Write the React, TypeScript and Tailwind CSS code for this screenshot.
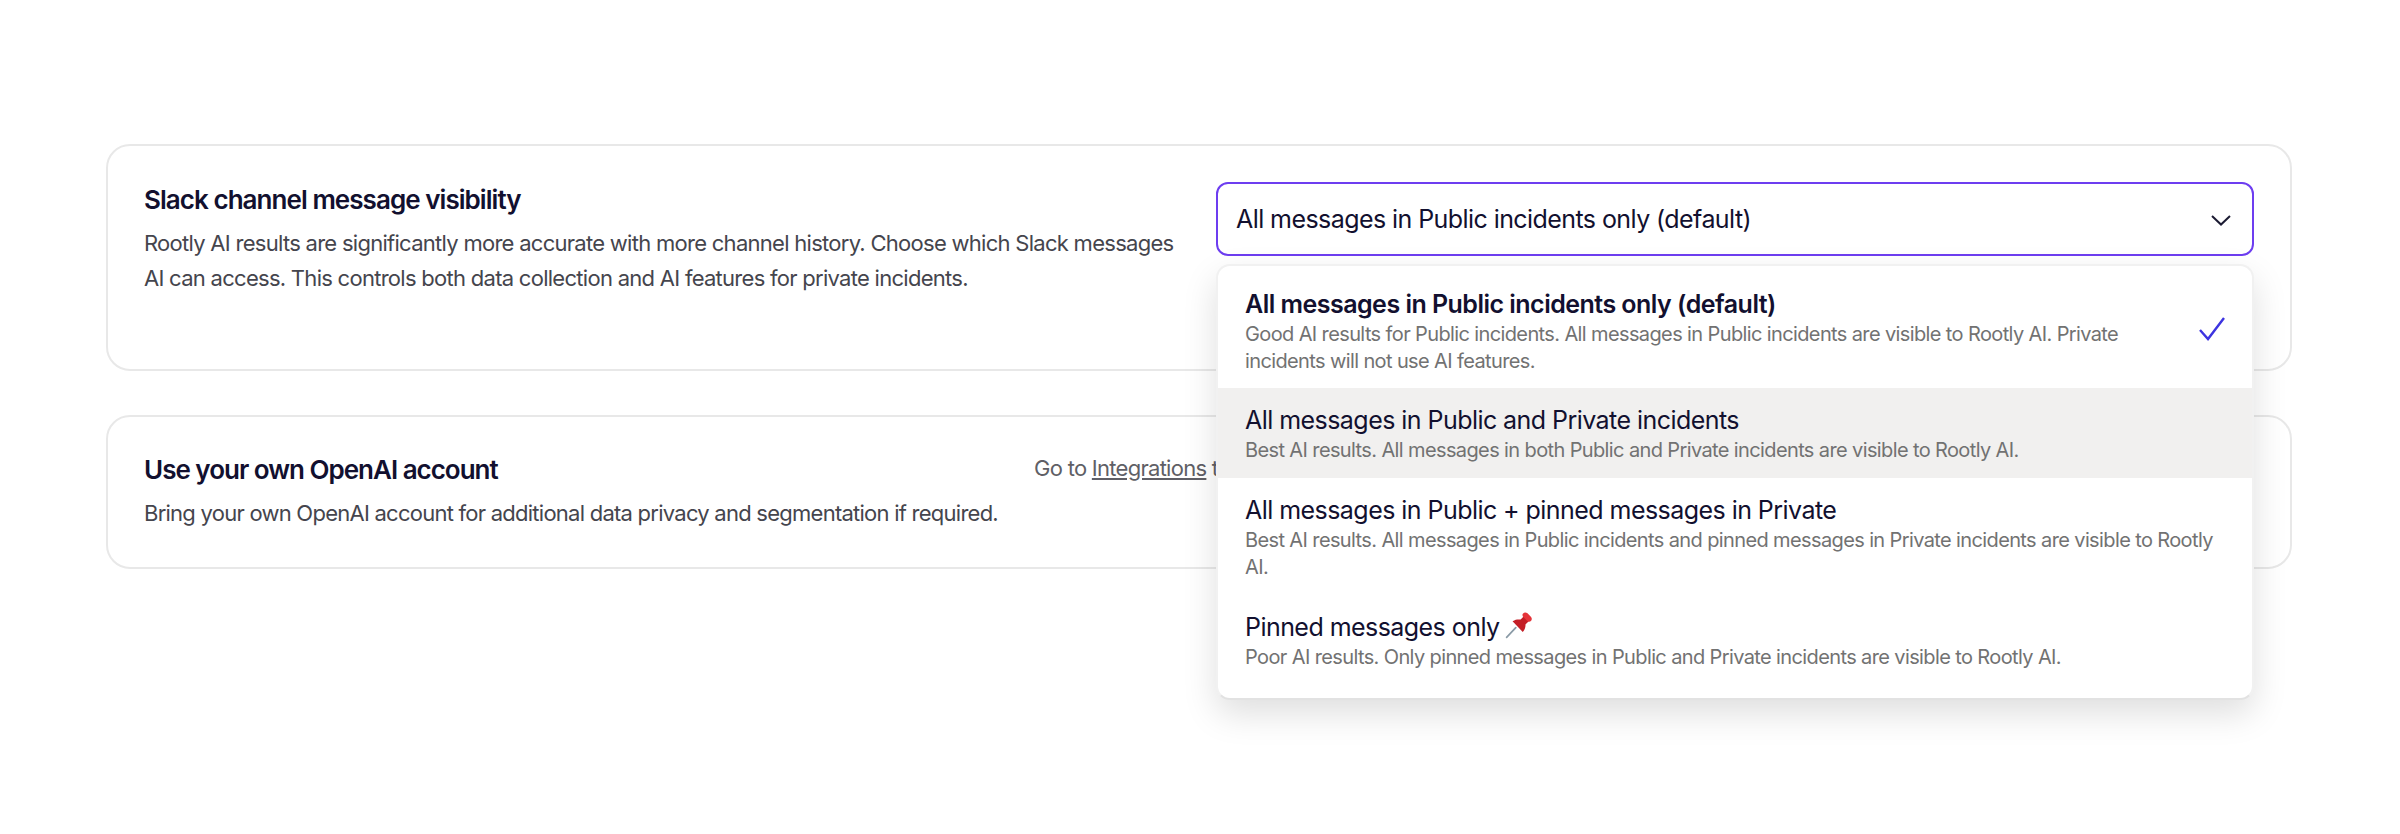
import React from "react";

const Pin = () => (
  <svg width="28" height="28" viewBox="0 0 26 26" className="inline-block align-[-3px] ml-[5px]">
    <path d="M1.5 24.5 L10 15.5" stroke="#8a9aa6" strokeWidth="1.6" strokeLinecap="round" />
    <path d="M7 9.5 C10 7.6 12.5 7.8 14.5 8 L18 4.5 L22.5 9 L19 12.5 C19.2 14.5 18.4 17.4 16.5 19.5 Z" fill="#c41e26" />
    <path d="M16.6 2.5 C17.8 1 19.6 1 20.9 2.2 L24.2 5.5 C25.3 6.8 25 8.6 23.8 9.6 C22.6 10.4 21.4 10 20.4 9 L17.2 5.8 C16.2 4.7 15.9 3.5 16.6 2.5 Z" fill="#e5343a" />
  </svg>
);

const options = [
  {
    title: "All messages in Public incidents only (default)",
    desc: "Good AI results for Public incidents. All messages in Public incidents are visible to Rootly AI. Private incidents will not use AI features.",
    selected: true,
    cls: "h-[122px] pt-[24px]",
  },
  {
    title: "All messages in Public and Private incidents",
    desc: "Best AI results. All messages in both Public and Private incidents are visible to Rootly AI.",
    cls: "h-[90px] pt-[18px] bg-[#f1f0ef]",
  },
  {
    title: "All messages in Public + pinned messages in Private",
    desc: "Best AI results. All messages in Public incidents and pinned messages in Private incidents are visible to Rootly AI.",
    cls: "h-[116px] pt-[18px]",
  },
  {
    title: "Pinned messages only",
    pin: true,
    desc: "Poor AI results. Only pinned messages in Public and Private incidents are visible to Rootly AI.",
    cls: "h-[106px] pt-[17px]",
  },
];

export default function App() {
  return (
    <div className="min-h-[834px] bg-white pl-[106px] pr-[108px] pt-[144px] font-['Inter',sans-serif] flex flex-col gap-[44px]">
      <div className="relative h-[227px] rounded-[24px] border-2 border-[#e8e8e8] px-[36px] pt-[36px] flex gap-[40px]">
        <div className="w-[1032px] shrink-0">
          <h2 className="mt-[2px] text-[26px] leading-[32px] font-semibold tracking-[-0.95px] text-[#12102f]">Slack channel message visibility</h2>
          <p className="mt-[10px] text-[22px] leading-[35px] tracking-[-0.72px] text-[#45454d]">
            Rootly AI results are significantly more accurate with more channel history. Choose which Slack messages AI can access. This controls both data collection and AI features for private incidents.
          </p>
        </div>
        <div className="relative flex-1">
          <div className="h-[74px] rounded-[12px] border-2 border-[#6d3df0] flex items-center justify-between pl-[18px] pr-[20px] pt-[2px] text-[25px] tracking-[-0.57px] text-[#12102f]">
            <span>All messages in Public incidents only (default)</span>
            <svg width="22" height="14" viewBox="0 0 22 14" fill="none"><path d="M2 3 L11 11.5 L20 3" stroke="#1c1b33" strokeWidth="2" /></svg>
          </div>
          <div className="absolute z-10 left-0 right-0 top-[82px] h-[436px] overflow-hidden rounded-[14px] bg-white border-2 border-[#f1f1f1] border-b-[#e2e2e2] shadow-[0_14px_34px_rgba(0,0,0,0.13)]">
            {options.map((o) => (
              <div key={o.title} className={`relative px-[27px] ${o.cls}`}>
                <div className={`text-[25px] leading-[28px] text-[#12102f] ${o.selected ? "font-semibold tracking-[-0.52px]" : "tracking-[-0.55px]"}`}>
                  {o.title}
                  {o.pin && <Pin />}
                </div>
                <div className="mt-[3px] text-[20px] leading-[27px] tracking-[-0.62px] text-[#727272]" style={{ width: o.selected ? 900 : 970 }}>{o.desc}</div>
                {o.selected && (
                  <svg className="absolute right-[26px] top-[50px]" width="28" height="26" viewBox="0 0 28 26" fill="none"><path d="M2 14 L10 23 L26 2" stroke="#3d34e0" strokeWidth="2.4" /></svg>
                )}
              </div>
            ))}
          </div>
        </div>
      </div>
      <div className="h-[154px] rounded-[24px] border-2 border-[#e8e8e8] px-[36px] pt-[36px] flex justify-between">
        <div>
          <h2 className="mt-[1px] text-[26px] leading-[32px] font-semibold tracking-[-1px] text-[#12102f]">Use your own OpenAI account</h2>
          <p className="mt-[8px] text-[22px] leading-[38px] tracking-[-0.75px] text-[#45454d]">Bring your own OpenAI account for additional data privacy and segmentation if required.</p>
        </div>
        <div className="-mt-[4px] w-[1220px] text-[22px] leading-[38px] tracking-[-0.72px] text-[#5f5f66]">
          Go to <span className="underline">Integrations</span> to connect your OpenAI account.
        </div>
      </div>
    </div>
  );
}
